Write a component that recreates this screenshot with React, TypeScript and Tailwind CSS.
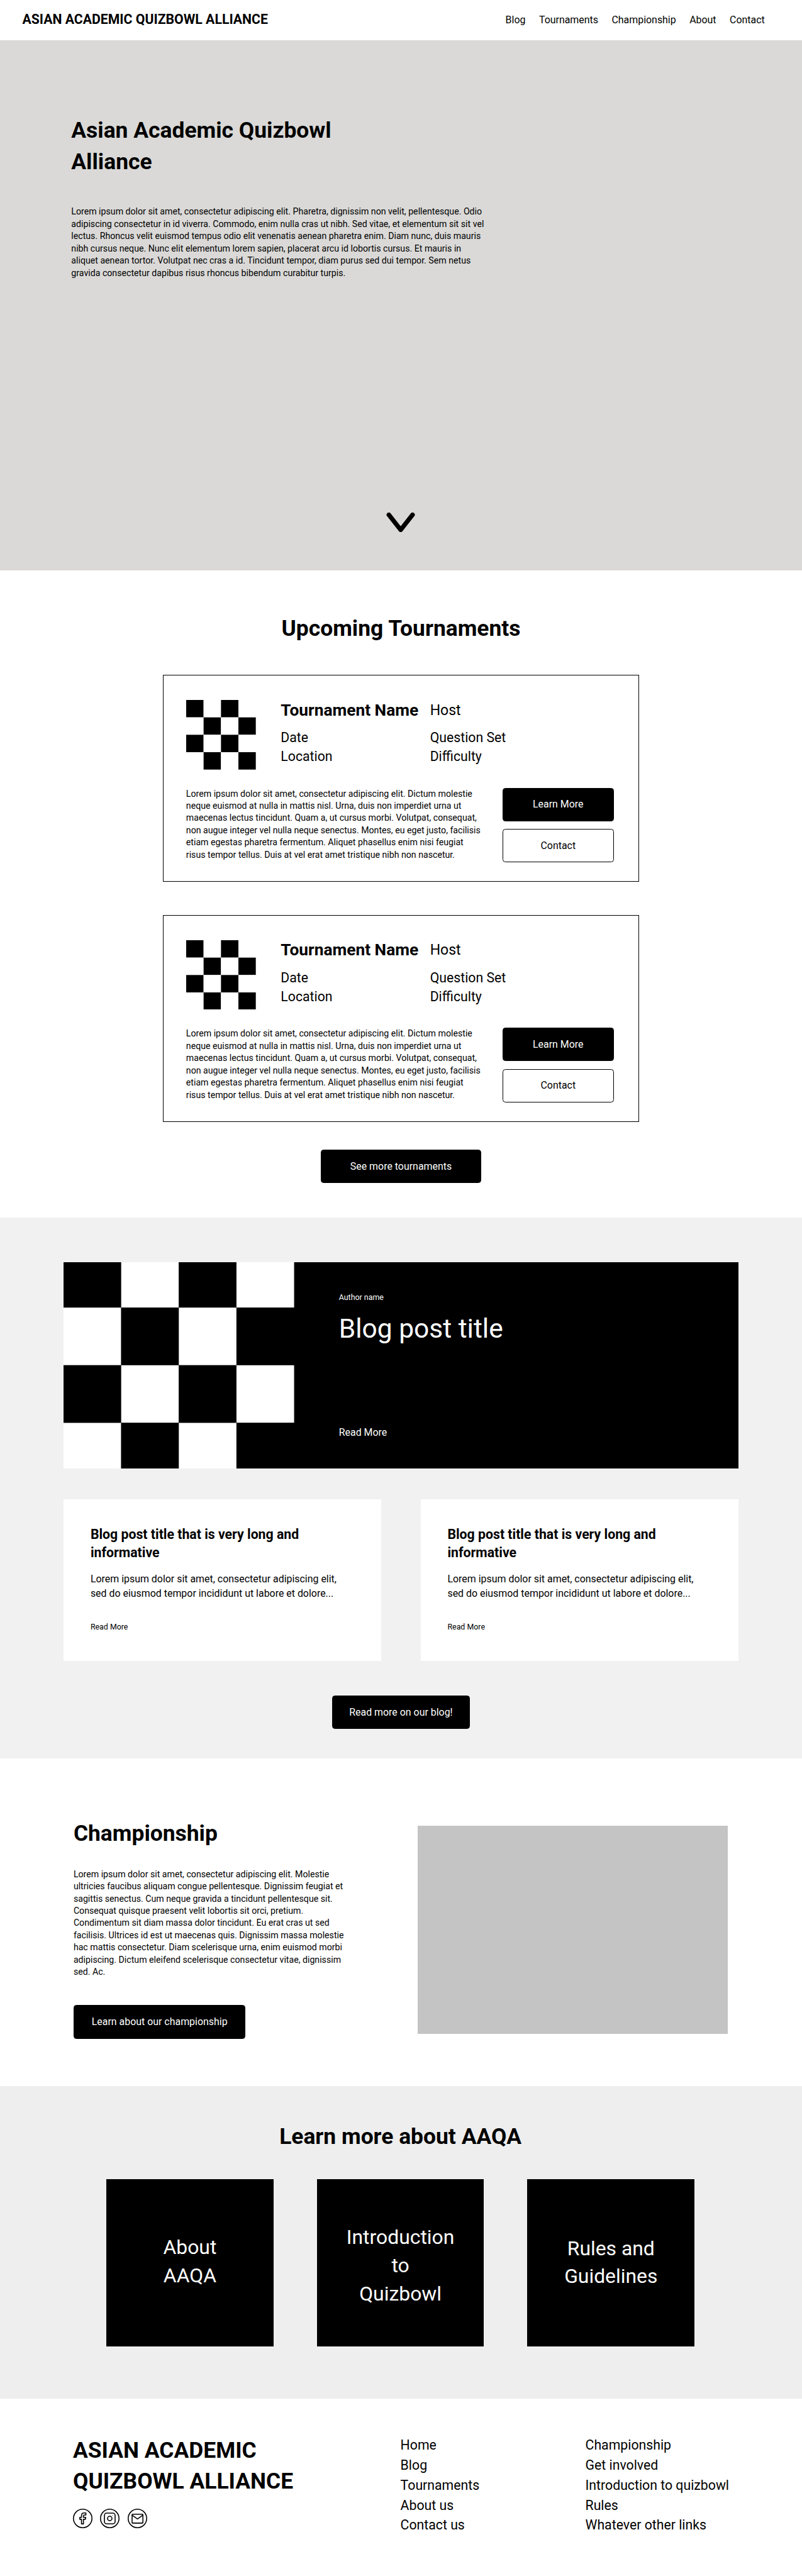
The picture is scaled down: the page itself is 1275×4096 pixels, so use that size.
import React from "react";

const navLinks = ["Blog", "Tournaments", "Championship", "About", "Contact"];

const footerColumns = [
  ["Home", "Blog", "Tournaments", "About us", "Contact us"],
  ["Championship", "Get involved", "Introduction to quizbowl", "Rules", "Whatever other links"],
];

const heroLines = [
  "Lorem ipsum dolor sit amet, consectetur adipiscing elit. Pharetra, dignissim non velit, pellentesque. Odio",
  "adipiscing consectetur in id viverra. Commodo, enim nulla cras ut nibh. Sed vitae, et elementum sit sit vel",
  "lectus. Rhoncus velit euismod tempus odio elit venenatis aenean pharetra enim. Diam nunc, duis mauris",
  "nibh cursus neque. Nunc elit elementum lorem sapien, placerat arcu id lobortis cursus. Et mauris in",
  "aliquet aenean tortor. Volutpat nec cras a id. Tincidunt tempor, diam purus sed dui tempor. Sem netus",
  "gravida consectetur dapibus risus rhoncus bibendum curabitur turpis.",
];

const tournamentLines = [
  "Lorem ipsum dolor sit amet, consectetur adipiscing elit. Dictum molestie",
  "neque euismod at nulla in mattis nisl. Urna, duis non imperdiet urna ut",
  "maecenas lectus tincidunt. Quam a, ut cursus morbi. Volutpat, consequat,",
  "non augue integer vel nulla neque senectus. Montes, eu eget justo, facilisis",
  "etiam egestas pharetra fermentum. Aliquet phasellus enim nisi feugiat",
  "risus tempor tellus. Duis at vel erat amet tristique nibh non nascetur.",
];

const championshipLines = [
  "Lorem ipsum dolor sit amet, consectetur adipiscing elit. Molestie",
  "ultricies faucibus aliquam congue pellentesque. Dignissim feugiat et",
  "sagittis senectus. Cum neque gravida a tincidunt pellentesque sit.",
  "Consequat quisque praesent velit lobortis sit orci, pretium.",
  "Condimentum sit diam massa dolor tincidunt. Eu erat cras ut sed",
  "facilisis. Ultrices id est ut maecenas quis. Dignissim massa molestie",
  "hac mattis consectetur. Diam scelerisque urna, enim euismod morbi",
  "adipiscing. Dictum eleifend scelerisque consectetur vitae, dignissim",
  "sed. Ac.",
];

function Lines({ lines }: { lines: string[] }) {
  return (
    <>
      {lines.map((line) => (
        <span key={line} className="block whitespace-nowrap">
          {line}
        </span>
      ))}
    </>
  );
}

function Paragraph({ lines }: { lines: string[] }) {
  return (
    <p className="text-[14.167px] leading-22">
      <Lines lines={lines} />
    </p>
  );
}

function Heading({ children }: { children: React.ReactNode }) {
  return <h2 className="text-[35.417px] leading-56 font-bold whitespace-nowrap">{children}</h2>;
}

function Button({ children, className = "", outline = false }: { children: React.ReactNode; className?: string; outline?: boolean }) {
  return (
    <button
      className={`flex h-60 items-center justify-center rounded-[4.5px] border border-black text-[15.9375px] leading-25 whitespace-nowrap ${
        outline ? "bg-white text-black" : "bg-black text-white"
      } ${className}`}
    >
      {children}
    </button>
  );
}

function Checkerboard({ className }: { className: string }) {
  return (
    <svg viewBox="0 0 4 4" preserveAspectRatio="xMidYMid slice" className={`shrink-0 ${className}`}>
      {[0, 1, 2, 3].flatMap((row) =>
        [0, 1, 2, 3].map((col) => (
          <rect key={`${row}-${col}`} x={col} y={row} width="1" height="1" fill={(row + col) % 2 ? "#fff" : "#000"} />
        )),
      )}
    </svg>
  );
}

function TournamentCard() {
  return (
    <article className="h-372 w-856 border border-black pt-44 pl-41">
      <div className="flex h-157.5">
        <Checkerboard className="size-125" />
        <div className="-mt-1.5 ml-45 grid w-536 grid-cols-2 content-start text-[21.25px] leading-34">
          <h3 className="text-[26.3px] leading-39 font-bold whitespace-nowrap">Tournament Name</h3>
          <p className="text-[23px] leading-40">Host</p>
          <p className="mt-12.5">Date</p>
          <p className="mt-12.5">Question Set</p>
          <p>Location</p>
          <p>Difficulty</p>
        </div>
      </div>
      <div className="flex">
        <div className="w-568">
          <Paragraph lines={tournamentLines} />
        </div>
        <div className="flex flex-col gap-14">
          <Button className="w-200">Learn More</Button>
          <Button className="w-200" outline>
            Contact
          </Button>
        </div>
      </div>
    </article>
  );
}

function BlogCard() {
  return (
    <article className="h-290 w-570 bg-white pt-45.5 pl-48">
      <h3 className="text-[21.25px] leading-33.5 font-bold">
        <Lines lines={["Blog post title that is very long and", "informative"]} />
      </h3>
      <p className="mt-18.5 text-[15.9375px] leading-25.25">
        <Lines lines={["Lorem ipsum dolor sit amet, consectetur adipiscing elit,", "sed do eiusmod tempor incididunt ut labore et dolore..."]} />
      </p>
      <p className="mt-37 text-[12.4px] leading-20">Read More</p>
    </article>
  );
}

function SocialIcon({ children }: { children: React.ReactNode }) {
  return (
    <svg viewBox="0 0 35 35" className="size-35" fill="none" stroke="#000" strokeWidth="1.8" strokeLinejoin="round" strokeLinecap="round">
      <circle cx="17.5" cy="17.5" r="16.6" />
      {children}
    </svg>
  );
}

export default function App() {
  return (
    <div className="w-[1275px] overflow-hidden bg-white font-['Roboto',sans-serif] text-black [--spacing:0.8854167px]">
      <header className="flex h-72 justify-between pr-67 pl-40">
        <div className="pt-18 text-[21.25px] leading-34 font-bold">ASIAN ACADEMIC QUIZBOWL ALLIANCE</div>
        <nav className="flex gap-24.25 pt-24 text-[15.9375px] leading-25">
          {navLinks.map((link) => (
            <a key={link}>{link}</a>
          ))}
        </nav>
      </header>

      <section className="flex h-952 flex-col bg-[#dad9d7] pt-135">
        <div className="h-713 pl-128">
          <Heading>
            Asian Academic Quizbowl
            <br />
            Alliance
          </Heading>
          <div className="mt-50.5">
            <Paragraph lines={heroLines} />
          </div>
        </div>
        <svg viewBox="0 0 52 36" className="h-36 w-52 self-center" fill="none" stroke="#000" strokeWidth="8" strokeLinecap="round" strokeLinejoin="round">
          <path d="M4.7 4 26 31 47.3 4" />
        </svg>
      </section>

      <section className="flex h-1163 flex-col items-center pt-77">
        <Heading>Upcoming Tournaments</Heading>
        <div className="mt-55 flex flex-col gap-59">
          <TournamentCard />
          <TournamentCard />
        </div>
        <Button className="mt-50 w-288">See more tournaments</Button>
      </section>

      <section className="flex h-971 flex-col items-center bg-[#f1f1f1] pt-80">
        <article className="flex h-370 w-1211 bg-black text-white">
          <Checkerboard className="h-370 w-414" />
          <div className="flex flex-col pt-52.5 pb-51.5 pl-80">
            <p className="text-[12.4px] leading-20">Author name</p>
            <h3 className="mt-13.5 text-[42.5px] leading-67">Blog post title</h3>
            <p className="mt-auto text-[15.9375px] leading-25">Read More</p>
          </div>
        </article>
        <div className="mt-56 flex w-1211 justify-between">
          <BlogCard />
          <BlogCard />
        </div>
        <Button className="mt-62 w-247.5">Read more on our blog!</Button>
      </section>

      <section className="flex h-588 justify-between pr-133 pl-132">
        <div className="pt-107">
          <Heading>Championship</Heading>
          <div className="mt-34">
            <Paragraph lines={championshipLines} />
          </div>
          <Button className="mt-48 w-309">Learn about our championship</Button>
        </div>
        <div className="mt-121 h-374 w-557 bg-[#c4c4c4]" />
      </section>

      <section className="flex h-562 flex-col items-center bg-[#eeeeee] pt-64 pr-2">
        <Heading>Learn more about AAQA</Heading>
        <div className="mt-48 flex gap-78 text-center text-[31.875px] leading-50.5 text-white">
          <a className="size-300 bg-black pt-96.5">
            <Lines lines={["About", "AAQA"]} />
          </a>
          <a className="size-300 bg-black pt-79">
            <Lines lines={["Introduction", "to", "Quizbowl"]} />
          </a>
          <a className="size-300 bg-black pt-98.5">
            <Lines lines={["Rules and", "Guidelines"]} />
          </a>
        </div>
      </section>

      <footer className="flex h-318 pt-65 pl-131">
        <div className="w-588">
          <Heading>
            ASIAN ACADEMIC
            <br />
            QUIZBOWL ALLIANCE
          </Heading>
          <div className="mt-20 flex gap-14">
            <SocialIcon>
              <path d="M15.3 27.3v-8.2h-3v-3.6h3v-2.8c0-3.2 1.8-5 4.7-5h3.2v3.6h-2.4c-1.4 0-2 .7-2 2v2.2h4.2l-.7 3.6h-3.5v8.2z" />
            </SocialIcon>
            <SocialIcon>
              <rect x="7.9" y="7.9" width="19.2" height="19.2" rx="4" />
              <circle cx="17.5" cy="17.5" r="4" />
              <circle cx="22.8" cy="12" r="0.2" strokeWidth="1.2" />
            </SocialIcon>
            <SocialIcon>
              <rect x="7.9" y="9.8" width="19.4" height="16" rx="1" />
              <path d="m8.2 11.8 9.4 6.6 9.4-6.6" />
            </SocialIcon>
          </div>
        </div>
        {footerColumns.map((links) => (
          <ul key={links[0]} className="w-332 text-[21.25px] leading-36">
            {links.map((link) => (
              <li key={link}>{link}</li>
            ))}
          </ul>
        ))}
      </footer>
    </div>
  );
}
